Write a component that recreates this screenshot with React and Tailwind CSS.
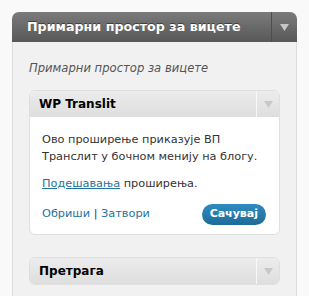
import React from "react";

const Arrow = ({ color = "#bbb" }) => (
  <svg width="9" height="7" viewBox="0 0 9 7">
    <path d="M0 0H9L4.5 7Z" fill={color} />
  </svg>
);

const WidgetHead = ({ title }) => (
  <div className="flex h-[26px] items-stretch bg-gradient-to-b from-[#ececec] to-[#dedede]">
    <div className="flex flex-1 items-center pl-[9px] text-[12px] font-bold text-black">
      {title}
    </div>
    <div className="flex w-[23px] items-center justify-center border-l border-[#f8f8f8]">
      <Arrow color="#c8c8c8" />
    </div>
  </div>
);

export default function App() {
  return (
    <div
      className="h-[296px] w-[309px] overflow-hidden bg-[#f9f9f9] pl-[12px] pt-[12px]"
      style={{ fontFamily: '"DejaVu Sans", Verdana, sans-serif' }}
    >
      <div className="w-[285px] h-[284px] rounded-t-[7px] border-x border-[#dcdcdc] bg-[#f1f1f1]">
        <div className="-mx-px flex h-[30px] rounded-t-[7px] bg-gradient-to-b from-[#7b7b7b] to-[#585858]">
          <div
            className="flex flex-1 items-center pl-[15px] text-[12.7px] font-bold text-white"
            style={{ textShadow: "0 -1px 0 #3f3f3f" }}
          >
            Примарни простор за вицете
          </div>
          <div className="flex w-[26px] items-center justify-center border-l border-[#4e4e4e]">
            <Arrow color="#c6c6c6" />
          </div>
        </div>

        <div className="px-[16px] pt-[18px]">
          <p className="text-[11.6px] leading-[17px] italic text-[#555]">Примарни простор за вицете</p>

          <div className="mt-[13px] overflow-hidden rounded-[6px] border border-[#dfdfdf] bg-white">
            <WidgetHead title="WP Translit" />
            <div className="px-[12px] pt-[14px] pb-[9px] text-[11.3px] text-[#333]">
              <p className="leading-[17px]">
                Ово проширење приказује ВП Транслит у бочном менију на блогу.
              </p>
              <p className="mt-[10px] leading-[17px]">
                <a className="text-[#21759b] underline">Подешавања</a> проширења.
              </p>
              <div className="mt-[12px] flex items-center justify-between">
                <div className="text-[#21759b]">
                  Обриши <span className="text-[#333]">|</span> Затвори
                </div>
                <button className="mr-[1px] h-[21px] rounded-full bg-gradient-to-b from-[#2e8cc0] to-[#1e6b98] px-[8px] text-[11px] font-bold text-white">
                  Сачувај
                </button>
              </div>
            </div>
          </div>

          <div className="mt-[22px] overflow-hidden rounded-[6px] border border-[#dfdfdf]">
            <WidgetHead title="Претрага" />
          </div>
        </div>
      </div>
    </div>
  );
}
